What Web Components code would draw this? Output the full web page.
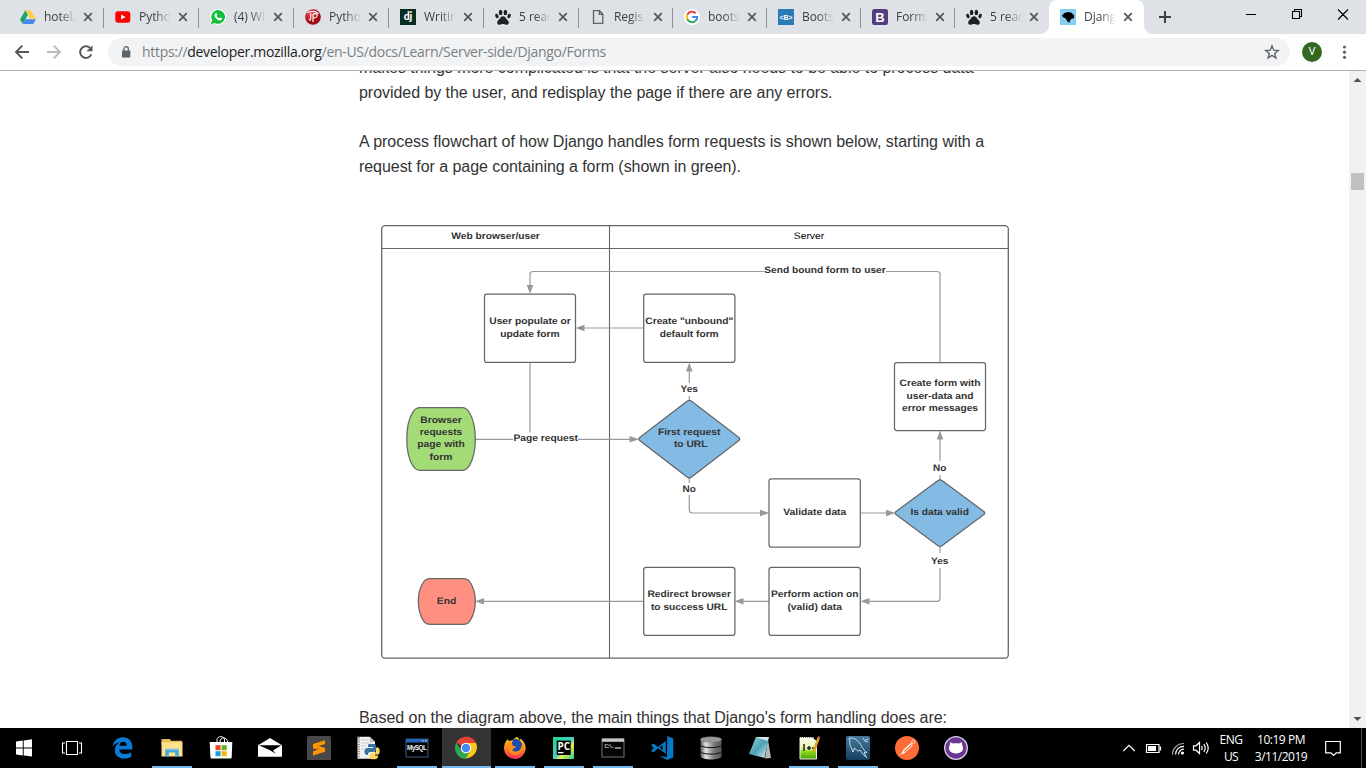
<!DOCTYPE html>
<html lang="en">
<head>
<meta charset="utf-8">
<title>Django Forms</title>
<style>
html,body{margin:0;height:100%;overflow:hidden;background:#fff}
</style>
</head>
<body>
<desktop-screen></desktop-screen>
<script>
const UI = '"Open Sans","Noto Sans",sans-serif';
const define = (name, build, after) => customElements.define(name, class extends HTMLElement {
  connectedCallback() {
    if (this.shadowRoot) return;
    this.attachShadow({ mode: 'open' }).innerHTML = build(this);
    if (after) after(this);
  }
});

/* Tab favicons, 16 x 16 */
const paw = '<g fill="#202124"><ellipse cx="5.6" cy="3.4" rx="1.8" ry="2.7"/><ellipse cx="10.4" cy="3.4" rx="1.8" ry="2.7"/><ellipse cx="1.9" cy="7" rx="1.6" ry="2.3" transform="rotate(-20 1.9 7)"/><ellipse cx="14.1" cy="7" rx="1.6" ry="2.3" transform="rotate(20 14.1 7)"/><path d="M8 7.2c2 0 2.7 1.7 3.7 3 1 1.200 2.200 1.900 2.100 3.500-.1 1.500-1.300 2.200-2.700 2-1.200-.1-1.900-.6-3.100-.6s-1.900.5-3.100.6c-1.400.2-2.600-.5-2.700-2-.1-1.600 1.100-2.300 2.100-3.500 1-1.300 1.700-3 3.700-3z"/></g>';
const favicons = {
  drive: '<path fill="#1da462" d="M5.4 1.200 8 5.800 2.700 14.800 0 10.500z"/><path fill="#ffcf48" d="M5.400 1.200h5.200L16 10.400h-5.300z"/><path fill="#4688f4" d="M5.400 10.300H16l-2.700 4.600H2.700z"/>',
  youtube: '<rect x=".3" y="2.200" width="15" height="11.500" rx="2.600" fill="#f00"/><path fill="#fff" d="M6.200 5.500v5l4.300-2.500z"/>',
  whatsapp: '<circle cx="8.100" cy="7.900" r="7.900" fill="#fff"/><path fill="#12c03c" d="M8.200 1a6.900 6.900 0 1 1-3.300 13L1 15.200l1.300-3.800A6.900 6.900 0 0 1 8.200 1z"/><path fill="#fff" d="M5.700 4.200c.7-.3 1 0 1.600 1.600.1.400-.6.900-.6 1.200.6 1.200 1.400 1.900 2.500 2.400.4 0 .8-1 1.200-.9 1.600.8 1.800.9 1.700 1.300-.4 1.300-1.400 1.700-2.400 1.600C6.800 10.900 4.500 8 4.500 6.200c0-.9.500-1.700 1.200-2z"/>',
  sphere: '<defs><radialGradient id="r" cx=".35" cy=".3"><stop stop-color="#ee5b60"/><stop offset=".6" stop-color="#c91f2a"/><stop offset="1" stop-color="#9e0e18"/></radialGradient></defs><circle cx="8" cy="8" r="7.800" fill="url(#r)"/><path fill="none" stroke="#fff" stroke-width="1.100" d="M3.800 10.500c1 .9 1.900.5 1.900-.7V4.200M8 13V5.200c3.500-1.600 5.300.8 3.600 2.800-.8.900-2 1-3.300.9M2.500 3.800C5 1.800 11 1.700 13.800 5"/>',
  django: '<rect width="16" height="16" fill="#092e20"/><text x="8" y="11.300" text-anchor="middle" font-family="Lato" font-weight="900" font-size="10.500" fill="#fff">dj</text>',
  paw,
  file: '<path d="M3.500 1.700h6l3.300 3.300v9.300H3.500z M9.300 1.900v3.400h3.300" fill="none" stroke="#5f6368" stroke-width="1.300"/>',
  google: '<circle cx="8" cy="8" r="8" fill="#fff"/><g fill="none" stroke-width="2"><path stroke="#ea4335" d="M3.300 5.700A5.200 5.200 0 0 1 11.700 4.300"/><path stroke="#fbbc05" d="M3.300 5.700a5.200 5.200 0 0 0 0 4.600"/><path stroke="#34a853" d="M3.300 10.300a5.200 5.200 0 0 0 8.100 1.600"/><path stroke="#4285f4" d="M11.400 11.900A5 5 0 0 0 13.200 8H8.200"/></g>',
  bsnipp: '<rect width="16" height="16" fill="#2a7ab8"/><text x="8" y="10.700" text-anchor="middle" font-family="Liberation Sans" font-weight="700" font-size="7.500" textLength="13" lengthAdjust="spacingAndGlyphs" fill="#fff">&lt;B&gt;</text>',
  bootstrap: '<rect width="16" height="16" rx="2.500" fill="#563d7c"/><text x="8" y="12.600" text-anchor="middle" font-family="Liberation Sans" font-weight="700" font-size="13" fill="#fff">B</text>',
  mdn: '<rect width="16" height="16" fill="#83d0f2"/><path d="M1.800 6.700 4.500 4 8.500 2.900l2.900.9 2.900 2.800-.5 2.700-2.300.4-1 1.400-.8 1 .1 1.600-2.300-.9-1.200-2.200-1.200-1.500-1.600-.5z"/>'
};

/* Taskbar icons, 24 x 24 */
const icons = {
  start: '<path fill="#fff" d="M4 5.500l6.800-1v7H4zM11.700 4.400 20 3.200v8.300h-8.300zM4 12.400h6.800v7l-6.800-1zM11.700 12.400H20v8.200l-8.300-1.200z"/>',
  views: '<path fill="none" stroke="#fff" stroke-width="1.100" d="M6.500 5.500h11v13h-11zM5 7H2.500v10H5M19 7h2.500v10H19"/>',
  edge: '<path fill="#0b7ad4" d="M1.400 11C2.200 5 6.300 1.200 11.900 1.200c6 0 9.500 4.400 9.500 9.600v2.600H8.300c.1 3.200 2.700 4.500 5.900 4.500 2.300 0 4.200-.6 6-1.700v4.500c-2 1.300-4.400 1.900-7.200 1.900-5.600 0-9.200-3.300-9.200-8.300 0-3.600 2-6.500 5-8C4.800 6.900 2.500 8.700 1.400 11zM8.400 9.700h7.300c0-2.500-1.300-3.900-3.400-3.900s-3.500 1.500-3.900 3.900z"/>',
  folder: '<path fill="#e7bd59" d="M1.500 3h8.200l1.500 1.700h10.900v4H1.500z"/><path fill="#fde18e" d="M1.500 6.200h21v14.300h-21z"/><path fill="#47acd8" d="M5.200 20.500v-7.700h13.600v7.700h-3.600v-4h-6.400v4z"/><path fill="#92d3ee" d="M5.200 12.800h13.600v1H5.200z"/>',
  store: '<path fill="none" stroke="#fff" d="M8 7V4c0-4.500 7.500-4.500 7.500 0v3M11 6c0-6 7.500-5 7.500 0"/><path fill="#fff" d="M.7 6h22.600l-.6 15c0 1-.5 1.600-1.600 1.600H3c-1 0-1.500-.6-1.600-1.600z"/><path fill="#e74a28" d="M6.500 9.200h5.100v5H6.500z"/><path fill="#6fae1e" d="M12.600 9.200h5.100v5h-5.100z"/><path fill="#139fe4" d="M6.500 15.200h5.100v5H6.500z"/><path fill="#fbb30b" d="M12.600 15.200h5.100v5h-5.100z"/>',
  mail: '<path fill="#fff" d="M0 9.200 12 2l12 7.200v11.600H0z"/><path fill="#000" d="M.8 9.300h22.600L15 14.500l2.800 3.300L11.500 14z"/>',
  sublime: '<rect width="24" height="24" rx="1.500" fill="#484848"/><path fill="#ff9800" d="M18 4.200 6 8v4.300l12 3.600v-4l-6.300-1.800L18 8z"/><path fill="#ff9800" d="M18 11.700 6 15.300v4.300l12-3.800z"/><path fill="#d57600" d="m9.500 11.200 7 3.600-7-2.100z"/>',
  pyfile: '<path fill="#f1f1f1" d="M1.500.7h12.200l5.300 5v17H1.500z"/><path fill="#c0c0c0" d="M13.700.7v5.200H19z"/><path stroke="#888" stroke-width="2" stroke-dasharray="1 1.300" d="M3 1v21"/><path stroke="#ccc" d="M5 4h7M5 7h11M5 10h5M5 13h3"/><path fill="#3672a5" d="M14 8h4c1.500 0 2 .8 2 2v4c0 1.500-2 2-4 2-3 0-4 0-4 3-3 0-3.700-2-3.500-4 .2-2.200 1-3 3.500-3h5v-1H12V9.300C12 8.500 13 8 14 8z"/><path fill="#ffd657" d="M20 11.500h2c2 1 2.300 5 .7 7H18v1h4c0 3-1 3.700-4 3.700-3.500 0-4.500-.7-4.500-3.200 0-2.500 1.500-3 4-3 2.200 0 2.500-.8 2.500-2.500z"/>',
  mysqlcmd: '<rect x="1" y="3" width="22" height="18" fill="#020202" stroke="#3b5a88"/><path fill="#2765b4" d="M1 3h22v3.500H1z"/><path fill="#9dbae0" d="M17 4h1.500v1.500H17zM20 4h1.500v1.500H20z"/><text x="2" y="14" font-family="Liberation Sans" font-weight="700" font-size="6.500" textLength="20" fill="#eee">MySQL</text>',
  chrome: '<path fill="#e64435" d="M12 12 2.300 6.700C5 1.200 11 .4 14 .8c4 .5 6.800 3.200 8 6.300H12z"/><path fill="#fbc817" d="M12 7.100h10c2 4 .7 8.300-1.500 11-2.500 3.300-6 4.400-9 4.300L16.500 14z"/><path fill="#2fa653" d="M2.300 6.400 7.500 14.700c1.600 2.600 5 2.700 7.500 1.800l-3.500 6.600C3.500 22.800-1.500 14 2.300 6.400z"/><circle cx="12" cy="12" r="5.300" fill="#fff"/><circle cx="12" cy="12" r="4.200" fill="#4588ee"/>',
  firefox: '<defs><linearGradient id="f" x2=".7" y2="1" x1=".8"><stop stop-color="#ffdc24"/><stop offset=".5" stop-color="#ff8c14"/><stop offset="1" stop-color="#f6305a"/></linearGradient></defs><path fill="url(#f)" d="M13.500 1c2 .5 3 2.300 3.200 3.600 0-1 .6-1.600 1-1.900 4.500 3.400 6.200 9 4.100 13.500C19.800 20.400 16.400 23 12 23 5.700 23 1 18.200 1 12.100 1 9 2 5.500 5 3l.5 2 4-.8z"/><path fill="#214cad" d="M10 4c3.500-2.700 8-.1 9 4 1 5-2.300 9-6.600 8.800C8 16.800 6 14 6.500 11l3.500 1.400 3-1.700-3.200-1-1-2.500z"/><path fill="#ff8f1a" d="M5 6.500c2-.6 3 .3 4 1.200L8 10l5 1-3 2c-1.500 1.500.5 3 3.500 2.500 4-.5 5-3.500 4.300-6.500 3 4.500.4 9-4.500 9.500C7.500 19 4 14 5 6.500z"/>',
  pycharm: '<defs><linearGradient id="p" x2="1" y2="1"><stop stop-color="#20d88b"/><stop offset=".5" stop-color="#42cdc0"/><stop offset=".65" stop-color="#e7ee52"/><stop offset="1" stop-color="#22cc88"/></linearGradient></defs><path fill="url(#p)" d="M1 1h21v22H1z"/><path d="M4.700 4.600h14v14.400h-14z"/><text x="5.500" y="13.500" font-family="Open Sans" font-weight="700" font-size="10" textLength="12.500" lengthAdjust="spacingAndGlyphs" fill="#fff">PC</text><path fill="#fff" d="M6 16h5.500v1.300H6z"/>',
  cmd: '<rect x="1" y="3" width="22" height="18" fill="#050505" stroke="#737373"/><path fill="#c6c9cc" d="M1 2.500h22v3.300H1z"/><text x="3.500" y="12.200" font-family="Liberation Mono" font-size="6" fill="#fff" textLength="10">C:\\.</text><path stroke="#fff" d="M14 12h6"/>',
  vscode: '<path fill="#0679c9" d="M17.300 0 23.300 2.600v18.800L17.300 24 9.500 20l7.500 1zM15.800 5v12.700L8 12.200l-4.700 4.400L1 14.800 3.900 12 1 9.200l2.300-1.700L8 11z"/><path fill="#000" d="m12.600 9.300-3 2.300 3 2.600z"/>',
  database: '<defs><linearGradient id="d"><stop stop-color="#565656"/><stop offset=".25" stop-color="#e6e6e6"/><stop offset=".65" stop-color="#777"/><stop offset="1" stop-color="#565656"/></linearGradient></defs><path fill="url(#d)" d="M1.500 3v17.500c1.500 4 19.500 4 21 0V3z"/><ellipse cx="12" cy="3.500" rx="10.500" ry="2.700" fill="#999" stroke="#777" stroke-width=".5"/><path fill="none" stroke="#101010" d="M1.300 9c1.500 3.500 20 3.500 21.400 0M1.300 15.500c1.500 3.500 20 3.500 21.400 0"/>',
  notes: '<defs><linearGradient id="n" x2="1" y2="1"><stop stop-color="#9bd7e4"/><stop offset=".5" stop-color="#4ea1b5"/><stop offset="1" stop-color="#e2f9ff"/></linearGradient></defs><path fill="#b9b9b9" d="m20 4 3 18-6 .5z"/><path fill="url(#n)" d="M8 1h13l-4.500 21L1 18z"/><path fill="#fff" opacity=".75" d="M8 1h13l-1.500 4z"/>',
  notepadpp: '<defs><linearGradient id="np" x2="0" y2="1"><stop stop-color="#f8ffe8"/><stop offset=".5" stop-color="#e5f8af"/><stop offset=".65" stop-color="#8dda19"/><stop offset="1" stop-color="#4c9f06"/></linearGradient></defs><path fill="url(#np)" stroke="#eee" d="M3 1.500h12l4.500 4v17.500H3z"/><path stroke="#777" stroke-dasharray="1 1" d="M4 1.500h14"/><path stroke="#222" stroke-width="1.500" fill="none" d="M7 8v7M10 12h4M12 10v4M15 12h4"/><path stroke="#e3a326" stroke-width="2.500" d="m21.700 1.500-5 14"/><path stroke="#b35736" stroke-width="2.500" d="m22.300.5-.7 2"/>',
  workbench: '<defs><linearGradient id="w" x2="0" y2="1"><stop stop-color="#47799e"/><stop offset="1" stop-color="#15405f"/></linearGradient></defs><rect width="24" height="24" rx="2" fill="url(#w)"/><path fill="none" stroke="#d8e8f1" stroke-width=".9" d="M3 2.500c5-1.500 9 2 11.500 6 2.500 4 3.500 6.500 6.500 8l-3 .2 2.500 5-4-4-2.500-3.800-2 1.300L8.500 12 7 16 5 11C2.500 8 5 6 3 2.500zM17 2l2 3 3 1M19.500 4l3-1"/>',
  postman: '<circle cx="12" cy="12" r="12" fill="#ff6c37"/><path fill="none" stroke="#fff" stroke-width="1" d="m5.500 18.800 3-3.500 8-7.700M8 18l8-7 1.500-2-1.700-1.500L8.500 14z"/><circle cx="18.300" cy="5.800" r="1.700" fill="none" stroke="#ffd5c6"/>',
  github: '<circle cx="12" cy="12" r="11.300" fill="#6b3896" stroke="#ddd2e9" stroke-width="1.300"/><path fill="#fff" d="M6.200 6.200 9.200 7.500c1.800-.4 3.800-.4 5.600 0l3-1.300.5 3.400c2.200 4.500-.9 7.900-6.300 7.900S3.500 14 5.700 9.600z"/>'
};

/* Spreads or tightens its text over the width it is given */
define('fit-text', () => `<style>:host{display:block;white-space:nowrap}span{display:inline-block}</style><span><slot></slot></span>`, el => {
  const s = el.shadowRoot.querySelector('span');
  const n = el.textContent.length;
  s.style.letterSpacing = (el.getAttribute('w') - s.getBoundingClientRect().width) / n + 'px';
});

define('browser-tab', el => `<style>
:host{display:flex;box-sizing:border-box;width:94px;height:34px;flex:none;align-items:center;padding-left:11px;position:relative;font:12px/16px ${UI};color:#3c4043}
:host([wide]){width:95px}
:host::after{content:"";position:absolute;right:0;top:8px;width:1px;height:20px;background:#8e9196}
:host([last])::after,:host([active])::after{display:none}
:host([active]){background:#fff;border-radius:8px 8px 0 0;width:95px}
.foot{position:absolute;bottom:0;width:8px;height:8px;display:none}
:host([active]) .foot{display:block}
.l{left:-8px;background:radial-gradient(circle at 0 0,transparent 7.500px,#fff 8px)}
.r{right:-8px;background:radial-gradient(circle at 100% 0,transparent 7.500px,#fff 8px)}
svg{flex:none}
.t{width:32px;margin-left:8px;overflow:hidden;white-space:nowrap;letter-spacing:-.05px;-webkit-mask:linear-gradient(90deg,#000 50%,transparent);mask:linear-gradient(90deg,#000 50%,transparent)}
.x{margin-left:7px}
</style><i class="foot l"></i><svg width="16" height="16" viewBox="0 0 16 16">${favicons[el.getAttribute('icon')]}</svg><div class="t"><slot></slot></div><svg class="x" width="10" height="10" viewBox="0 0 10 10"><path d="m1.200 1.200 7.600 7.600m0-7.600L1.200 8.800" stroke="#54575b" stroke-width="1.700"/></svg><i class="foot r"></i>`);

define('tab-strip', () => `<style>
:host{display:flex;height:34px;background:#dee1e6;padding-left:9px;box-sizing:border-box}
.plus{margin:10px 0 0 14px}.win{margin-left:auto;margin-right:16px}svg{flex:none}
</style><slot></slot><svg class="plus" width="14" height="14" viewBox="0 0 14 14"><path d="M7 1v12M1 7h12" stroke="#3c4043" stroke-width="2"/></svg>
<svg class="win" width="104" height="34" viewBox="1246 0 104 34"><g fill="none" stroke="#000" stroke-width="1.100"><path d="M1246 14.500h10M1292.500 11.500h7v7h-7zM1294.500 11.500v-2h7v7h-2M1338 9.500l10 10m0-10-10 10"/></g></svg>`);

define('address-bar', () => `<style>
:host{display:flex;height:36px;align-items:center;background:#fff;border-bottom:1px solid #b1b2b4;padding-left:14px;box-sizing:content-box}
.pill{display:flex;align-items:center;width:1182px;height:28px;border-radius:14px;background:#f1f3f4;box-sizing:border-box;padding:0 10px 0 12px;margin-left:14px;font:14px/20px ${UI};color:#7b7f84}
b{font-weight:400;color:#202124}.url{margin-left:10px}.star{margin-left:auto}
.who{width:20px;height:20px;border-radius:50%;background:#33691e;color:#fff;font:11px/20px Roboto;text-align:center;margin-left:12px}
.dots{margin-left:20px}
</style>
<svg width="80" height="20" viewBox="14 42 80 20" fill="none" stroke-width="1.900"><path stroke="#54575b" d="M29 52H16m6.300-6.300L16 52l6.300 6.300"/><path stroke="#b9bbbe" d="M47 52h13m-6.300-6.300L60 52l-6.300 6.300"/><path stroke="#54575b" d="M91.300 54.300a5.800 5.800 0 1 1-1.300-6.400"/><path fill="#54575b" d="M92.500 45.300v6h-6z"/></svg>
<div class="pill"><svg width="12" height="14" viewBox="0 0 12 14"><path fill="#5f6368" d="M2 5.500h8.300v7H2z"/><path d="M3.900 6V3.900a2.200 2.200 0 0 1 4.400 0V6" fill="none" stroke="#5f6368" stroke-width="1.300"/></svg>
<fit-text class="url" w="464">https://<b>developer.mozilla.org</b>/en-US/docs/Learn/Server-side/Django/Forms</fit-text>
<svg class="star" width="16" height="16" viewBox="0 0 16 16"><path d="m8 1.900 1.700 4.300 4.600.3-3.600 2.900 1.200 4.500L8 11.400l-3.900 2.500 1.200-4.500L1.700 6.500l4.600-.3z" fill="none" stroke="#5f6368" stroke-width="1.400"/></svg></div>
<div class="who">V</div><svg class="dots" width="5" height="16" viewBox="0 0 5 16" fill="#5f6368"><circle cx="2.500" cy="3" r="1.600"/><circle cx="2.500" cy="8.200" r="1.600"/><circle cx="2.500" cy="13.300" r="1.600"/></svg>`);

/* Process chart: each label is [centre x, baseline, width, text] */
const labels = [
  [495.600,239.200,88.500,'Web browser/user'],
  [825,273.200,121.500,'Send bound form to user'],
  [530,324.200,81.500,'User populate or'],[530,336.500,59.500,'update form'],
  [689.300,324.200,88,'Create "unbound"'],[689.200,336.500,59,'default form'],
  [940,386.400,81,'Create form with'],[940,398.700,67,'user-data and'],[940,411,76,'error messages'],
  [689.200,391.700,17.500,'Yes'],[689.200,435.200,62.500,'First request'],[690.700,447.300,33.500,'to URL'],
  [441,422.800,41.500,'Browser'],[441,435,42.500,'requests'],[441,447.200,47.500,'page with'],[441,459.500,23,'form'],
  [545.700,441.200,64.500,'Page request'],[689.200,491.500,13.300,'No'],
  [814.800,515.200,63,'Validate data'],[939.700,515.200,58.500,'Is data valid'],
  [939.700,471.200,13.300,'No'],[939.700,564,17.500,'Yes'],
  [814.800,597.300,87.500,'Perform action on'],[814.700,609.600,54.500,'(valid) data'],
  [689.200,597.300,83.500,'Redirect browser'],[689.200,609.600,76.500,'to success URL'],
  [446.500,603.500,19.500,'End']
];
define('flow-chart', () => `<style>:host{display:block;height:434px;width:628px}svg{display:block}text{font-family:"Liberation Sans",sans-serif;font-size:9.400px;font-weight:700;text-anchor:middle;fill:#333;text-rendering:geometricPrecision}</style>
<svg width="628" height="434" viewBox="381 225 628 434">
<g fill="none" stroke="#666" stroke-width="1.300"><rect x="381.700" y="225.600" width="626.600" height="432.600" rx="3.500"/><path stroke-width="1.100" d="M382 248.500h626M609.500 226v432"/></g>
<g fill="none" stroke="#999" stroke-width="1.200">
<path d="M940 362V274.500q0-3-3-3H886M764 271.500H533q-3 0-3 3V286M530 362v70.500M643 328h-60M476 439.300h37M578 439.300h53M689.300 400v-4M689.300 383v-13M689.300 478v5M689.300 495v15q0 3 3 3H761M861 513h26M940 480v-5M940 461v-22M940 547v6M940 568v30.300q0 3-3 3H868M769 601.300h-26M643 601.300H483"/></g>
<g fill="#999"><path d="m530 294-3.300-9h6.600zM575.500 328l9-3.300v6.600zM639 439.300l-9.500-3.300v6.600zM689.300 362.500l-3.300 9h6.600zM769.500 513l-9.500-3.300v6.600zM895.500 513l-9.500-3.300v6.600zM940 430.500l-3.300 9h6.600zM860.500 601.300l9-3.300v6.600zM734.500 601.300l9-3.300v6.600zM475 601.300l9-3.300v6.600z"/></g>
<g fill="#fff" stroke="#666" stroke-width="1.250">
<rect x="484.500" y="294.100" width="91" height="68.300" rx="2.500"/><rect x="643.700" y="294.100" width="91.200" height="68.300" rx="2.500"/><rect x="894.500" y="362.500" width="91" height="68.100" rx="2.500"/><rect x="769" y="478.900" width="91.300" height="68.300" rx="2.500"/><rect x="769" y="567.400" width="91.300" height="68" rx="2.500"/><rect x="643.700" y="567.400" width="91.200" height="68" rx="2.500"/>
<path fill="#a3dc77" d="M420 407.700h42q4.500 0 7.200 4.500Q475.300 422 475.300 439t-6.100 26.800q-2.700 4.500-7.200 4.500h-42q-4.500 0-7.200-4.500Q406.800 456 406.800 439t6-26.800q2.700-4.500 7.200-4.500z"/>
<path fill="#ff8f80" d="M430 578.500h33.500q4 0 6.500 3.500 5.300 8 5.300 19.300T470 620.800q-2.500 3.500-6.500 3.500H430q-4 0-6.500-3.500-5.200-8-5.200-19.500T423.500 582q2.500-3.500 6.500-3.500z"/>
<path fill="#83bbe5" d="M687 401.300q2.300-1.700 4.600 0l47 36q2.300 1.800 0 3.500l-47 36.300q-2.300 1.800-4.600 0l-47-36.300q-2.300-1.700 0-3.500zM937.700 480.700q2.300-1.600 4.600 0l41.300 30.600q2.300 1.700 0 3.400l-41.300 30.800q-2.300 1.600-4.600 0l-41.400-30.800q-2.300-1.700 0-3.400z"/></g>
${labels.map(([x, y, w, t]) => `<text x="${x}" y="${y}" textLength="${w}" lengthAdjust="spacingAndGlyphs">${t}</text>`).join('')}
<text x="809" y="239.200" textLength="30.500" style="font-weight:400;fill:#000" lengthAdjust="spacingAndGlyphs">Server</text>
</svg>`);

define('scroll-bar', () => `<style>:host{display:flex;flex-direction:column;align-items:center;width:17px;background:#f1f1f1}.a{flex:none}i{width:13px;height:17px;background:#c1c1c1;margin:85px 0 auto}</style>
<svg class="a" width="17" height="17"><path fill="#505050" d="m4.500 11 4-4 4 4z"/></svg><i></i><svg class="a" width="17" height="17"><path fill="#505050" d="m4.500 6 4 4 4-4z"/></svg>`);

define('article-page', () => `<style>
:host{display:flex;flex:1;min-height:0;overflow:hidden;background:#fff}
article{flex:1;padding-left:359px;font:16px/25px "Liberation Sans",sans-serif;color:#333;margin-top:-16px}
p{margin:0 0 24px}flow-chart{margin:46px 0 46px 22px}
</style><article><p><fit-text w="614.500">makes things more complicated is that the server also needs to be able to process data</fit-text><fit-text w="473.500">provided by the user, and redisplay the page if there are any errors.</fit-text></p>
<p><fit-text w="625">A process flowchart of how Django handles form requests is shown below, starting with a</fit-text><fit-text w="382">request for a page containing a form (shown in green).</fit-text></p>
<flow-chart></flow-chart><p><fit-text w="588">Based on the diagram above, the main things that Django's form handling does are:</fit-text></p></article><scroll-bar></scroll-bar>`);

define('task-button', el => `<style>:host{display:flex;width:49px;height:40px;align-items:center;justify-content:center;box-sizing:border-box;position:relative}
:host([open])::after{content:"";position:absolute;left:4.500px;right:4.500px;bottom:0;height:2px;background:#76b9ed}
:host([small]){width:48px}
:host([active]){background:#333}:host([active])::after{left:0;right:0}</style><svg width="24" height="24" viewBox="0 0 24 24">${icons[el.getAttribute('icon')]}</svg>`);

define('task-bar', () => `<style>
:host{display:flex;height:40px;background:#000;color:#fff;align-items:center;font:12px/17px ${UI}}
.gap{width:2.500px}.tray{margin-left:auto;flex:none}
.tx{display:flex;flex-direction:column;align-items:center}
.lang{margin-left:9px;width:24px}.time{margin-left:11px;width:54px}
.note{margin-left:17px}.edge{width:1px;height:40px;background:#4b4b4b;margin-left:20px;margin-right:4px}
</style>
<task-button small icon="start"></task-button><task-button small icon="views"></task-button><span class="gap"></span>
<task-button icon="edge"></task-button><task-button open icon="folder"></task-button><task-button icon="store"></task-button><task-button icon="mail"></task-button><task-button icon="sublime"></task-button><task-button icon="pyfile"></task-button><task-button open icon="mysqlcmd"></task-button><task-button open active icon="chrome"></task-button><task-button open icon="firefox"></task-button><task-button open icon="pycharm"></task-button><task-button open icon="cmd"></task-button><task-button icon="vscode"></task-button><task-button icon="database"></task-button><task-button icon="notes"></task-button><task-button open icon="notepadpp"></task-button><task-button open icon="workbench"></task-button><task-button icon="postman"></task-button><task-button icon="github"></task-button>
<svg class="tray" width="88" height="40" viewBox="1122 728 88 40" fill="none" stroke="#fff" stroke-width="1.200">
<path d="m1123.300 751 5.700-5.700 5.700 5.700"/>
<path d="M1146.500 744.500h12.500v8h-12.500zM1160.500 746.500v4"/><path fill="#fff" stroke="none" d="M1148 746h8v5h-8z"/>
<path stroke="#aaa" d="M1172.500 754.500c0-6 5-11 11.500-11"/><path d="M1175.500 754.500c0-4.800 3.700-8.200 8.500-8.200M1178.500 754.500c0-3 2.400-5.300 5.500-5.300"/><circle cx="1182.500" cy="753" r="1.600" fill="#fff" stroke="none"/>
<path d="M1193.500 745.800h2.500l3.500-3.300v11l-3.500-3.300h-2.500zM1201.500 746c.8 1.200.8 2.800 0 4M1203.800 744.200c1.700 2.300 1.700 5.300 0 7.600M1206.200 742.500c2.500 3.400 2.500 7.600 0 11"/></svg>
<div class="tx lang"><fit-text w="23">ENG</fit-text><fit-text w="14">US</fit-text></div>
<div class="tx time"><fit-text w="48">10:19 PM</fit-text><fit-text w="52.500">3/11/2019</fit-text></div>
<svg class="note" width="16" height="18" viewBox="0 0 16 18"><path d="M.7 2.500h14.600v11.300h-4l-2.800 2.700-2.500-2.700H.7z" fill="none" stroke="#fff" stroke-width="1.200"/></svg><span class="edge"></span>`);

define('desktop-screen', () => `<style>:host{display:flex;flex-direction:column;width:1366px;height:768px;overflow:hidden}</style>
<tab-strip><browser-tab wide icon="drive">hotela</browser-tab><browser-tab wide icon="youtube">Pytho</browser-tab><browser-tab wide icon="whatsapp">(4) Wh</browser-tab><browser-tab wide icon="sphere">Pytho</browser-tab><browser-tab wide icon="django">Writin</browser-tab><browser-tab wide icon="paw">5 reac</browser-tab><browser-tab icon="file">Regis</browser-tab><browser-tab icon="google">boots</browser-tab><browser-tab icon="bsnipp">Boots</browser-tab><browser-tab icon="bootstrap">Forms</browser-tab><browser-tab icon="paw" last>5 reac</browser-tab><browser-tab icon="mdn" active>Djang</browser-tab></tab-strip>
<address-bar></address-bar><article-page></article-page><task-bar></task-bar>`);
</script>
</body>
</html>
